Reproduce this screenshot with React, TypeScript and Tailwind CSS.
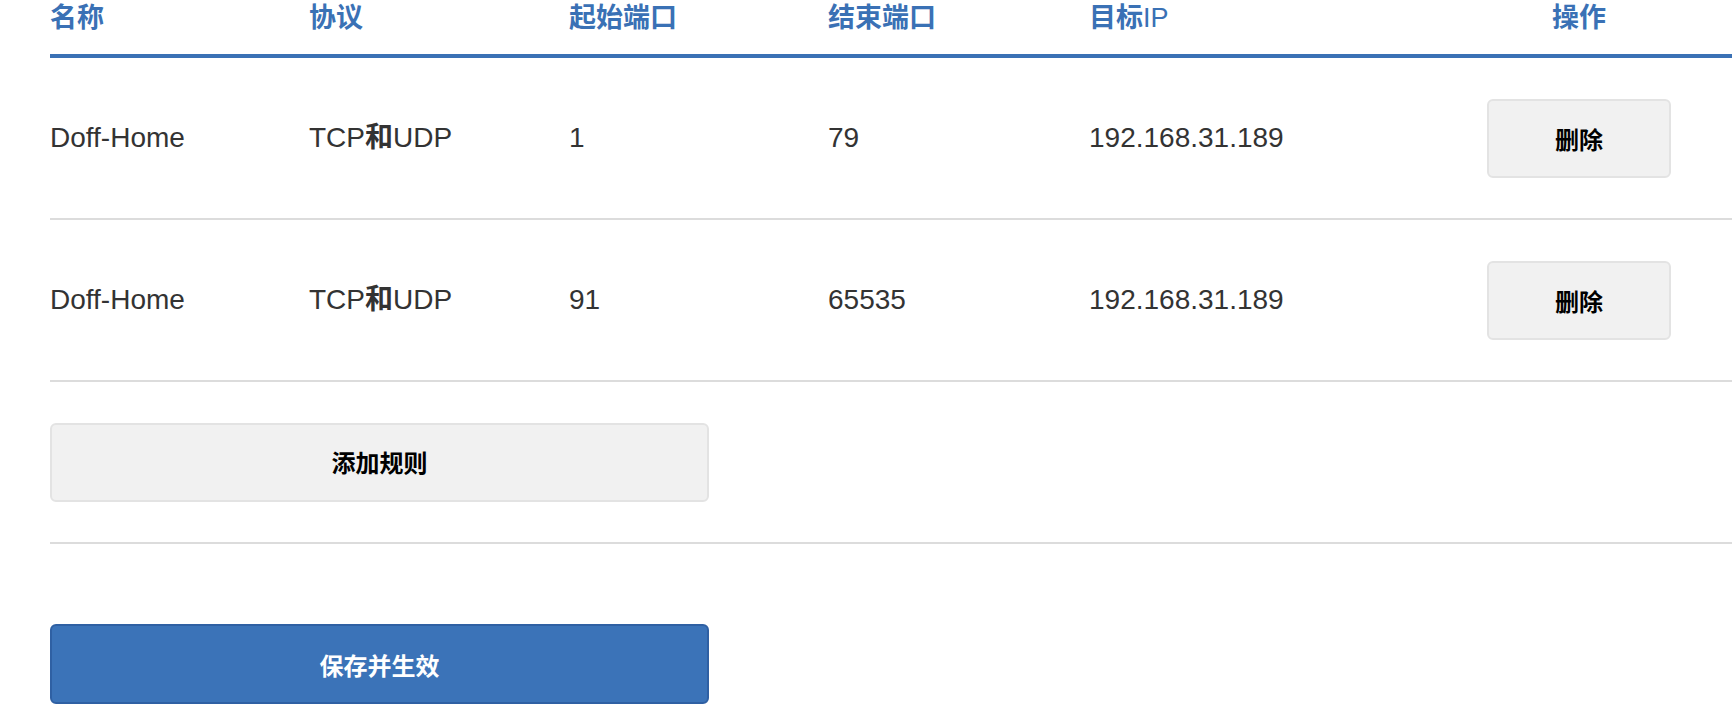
const rules = [
  { name: "Doff-Home", start: "1", end: "79", ip: "192.168.31.189" },
  { name: "Doff-Home", start: "91", end: "65535", ip: "192.168.31.189" },
];

const font = { fontFamily: '"Liberation Sans", Arial, "Noto Sans CJK SC", sans-serif' };

const cols = "grid grid-cols-[259px_260px_259px_261px_259px_1fr]";

function Protocol() {
  return (
    <span>
      TCP<span className="font-semibold">和</span>UDP
    </span>
  );
}

export default function App() {
  return (
    <div className="w-[1732px] h-[718px] overflow-hidden bg-white pl-[50px]" style={font}>
      {/* table header */}
      <div className={`${cols} h-[58px] border-b-4 border-[#3a71b5] text-[27px] font-bold text-[#3a71b5] leading-[36px]`}>
        <div>名称</div>
        <div>协议</div>
        <div>起始端口</div>
        <div>结束端口</div>
        <div>
          目标<span className="font-normal">IP</span>
        </div>
        <div className="pl-[139px]">
          <div className="w-[184px] text-center">操作</div>
        </div>
      </div>

      {rules.map((r, i) => (
        <div
          key={i}
          className={`${cols} h-[162px] items-center border-b-2 border-[#dcdcdc] text-[28px] text-[#333333]`}
        >
          <div>{r.name}</div>
          <div>
            <Protocol />
          </div>
          <div>{r.start}</div>
          <div>{r.end}</div>
          <div>{r.ip}</div>
          <div className="pl-[139px]">
            <button className="w-[184px] h-[79px] pt-[5px] rounded-md border-2 border-[#e3e3e3] bg-[#f1f1f1] text-[24px] font-bold text-black">
              删除
            </button>
          </div>
        </div>
      ))}

      <div className="h-[162px] flex items-center border-b-2 border-[#dcdcdc]">
        <button className="w-[659px] h-[79px] pt-[4px] rounded-md border-2 border-[#e3e3e3] bg-[#f1f1f1] text-[24px] font-bold text-black">
          添加规则
        </button>
      </div>

      <div className="pt-[80px]">
        <button className="w-[659px] h-[80px] pt-[6px] rounded-md border-2 border-[#2f60a3] bg-[#3b73b8] text-[24px] font-bold text-white">
          保存并生效
        </button>
      </div>
    </div>
  );
}
